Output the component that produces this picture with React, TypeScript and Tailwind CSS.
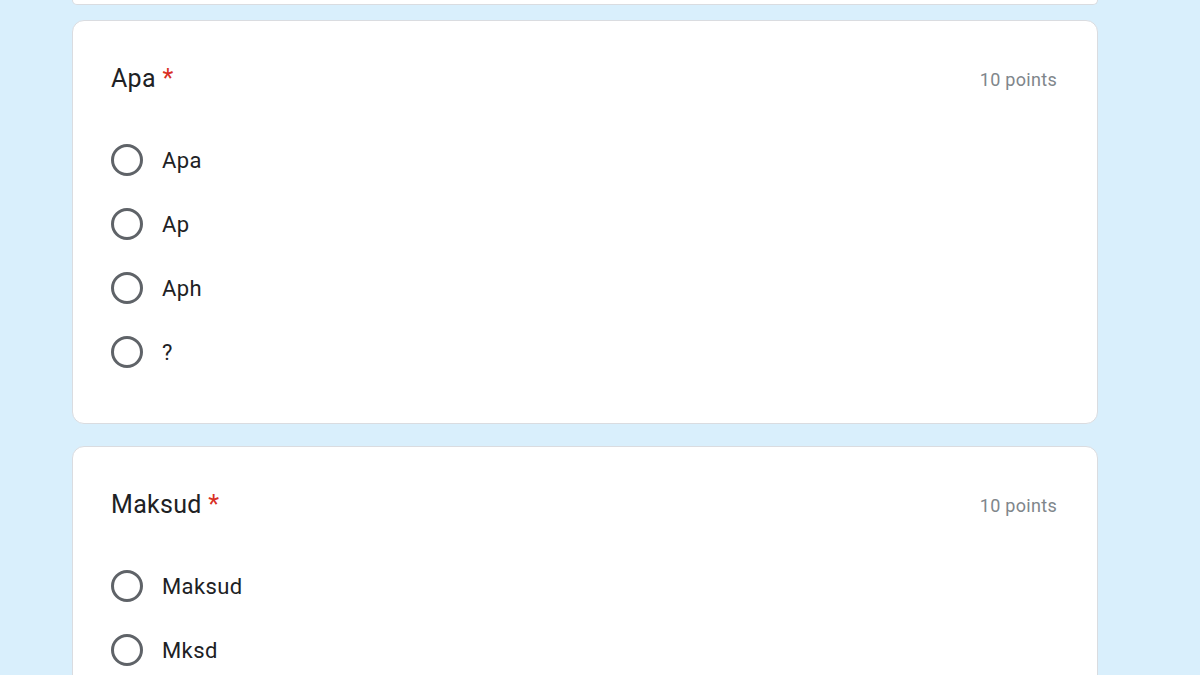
import React from 'react'

const font = { fontFamily: 'Roboto, "Noto Sans", Arial, sans-serif' }

function Radio({ label }: { label: string }) {
  return (
    <div className="flex h-16 items-center">
      <span className="h-8 w-8 shrink-0 rounded-full border-[3px] border-[#5f6368]" />
      <span className="ml-[19px] text-[22px] tracking-[0.4px] text-[#202124]">{label}</span>
    </div>
  )
}

function Question({ title, options }: { title: string; options: string[] }) {
  return (
    <div className="rounded-xl border border-[#dadce0] bg-white pl-[38px] pr-[40px] pt-[42px] pb-[39px]">
      <div className="flex h-8 items-center justify-between">
        <div className="text-[25px] tracking-[0.3px] text-[#202124]">
          {title} <span className="text-[#d93025]">*</span>
        </div>
        <div className="text-[18px] tracking-[0.3px] text-[#80868b]">10 points</div>
      </div>
      <div className="mt-[33px]">
        {options.map((o) => (
          <Radio key={o} label={o} />
        ))}
      </div>
    </div>
  )
}

export default function App() {
  return (
    <div className="h-[675px] overflow-hidden bg-[#d9effc]" style={font}>
      <div className="ml-[72px] w-[1026px]">
        <div className="h-[5px] rounded-b-xl border-x border-b border-[#dadce0] bg-white" />
        <div className="mt-[15px]">
          <Question title="Apa" options={['Apa', 'Ap', 'Aph', '?']} />
        </div>
        <div className="mt-[22px]">
          <Question title="Maksud" options={['Maksud', 'Mksd', 'Maks', 'M']} />
        </div>
      </div>
    </div>
  )
}
